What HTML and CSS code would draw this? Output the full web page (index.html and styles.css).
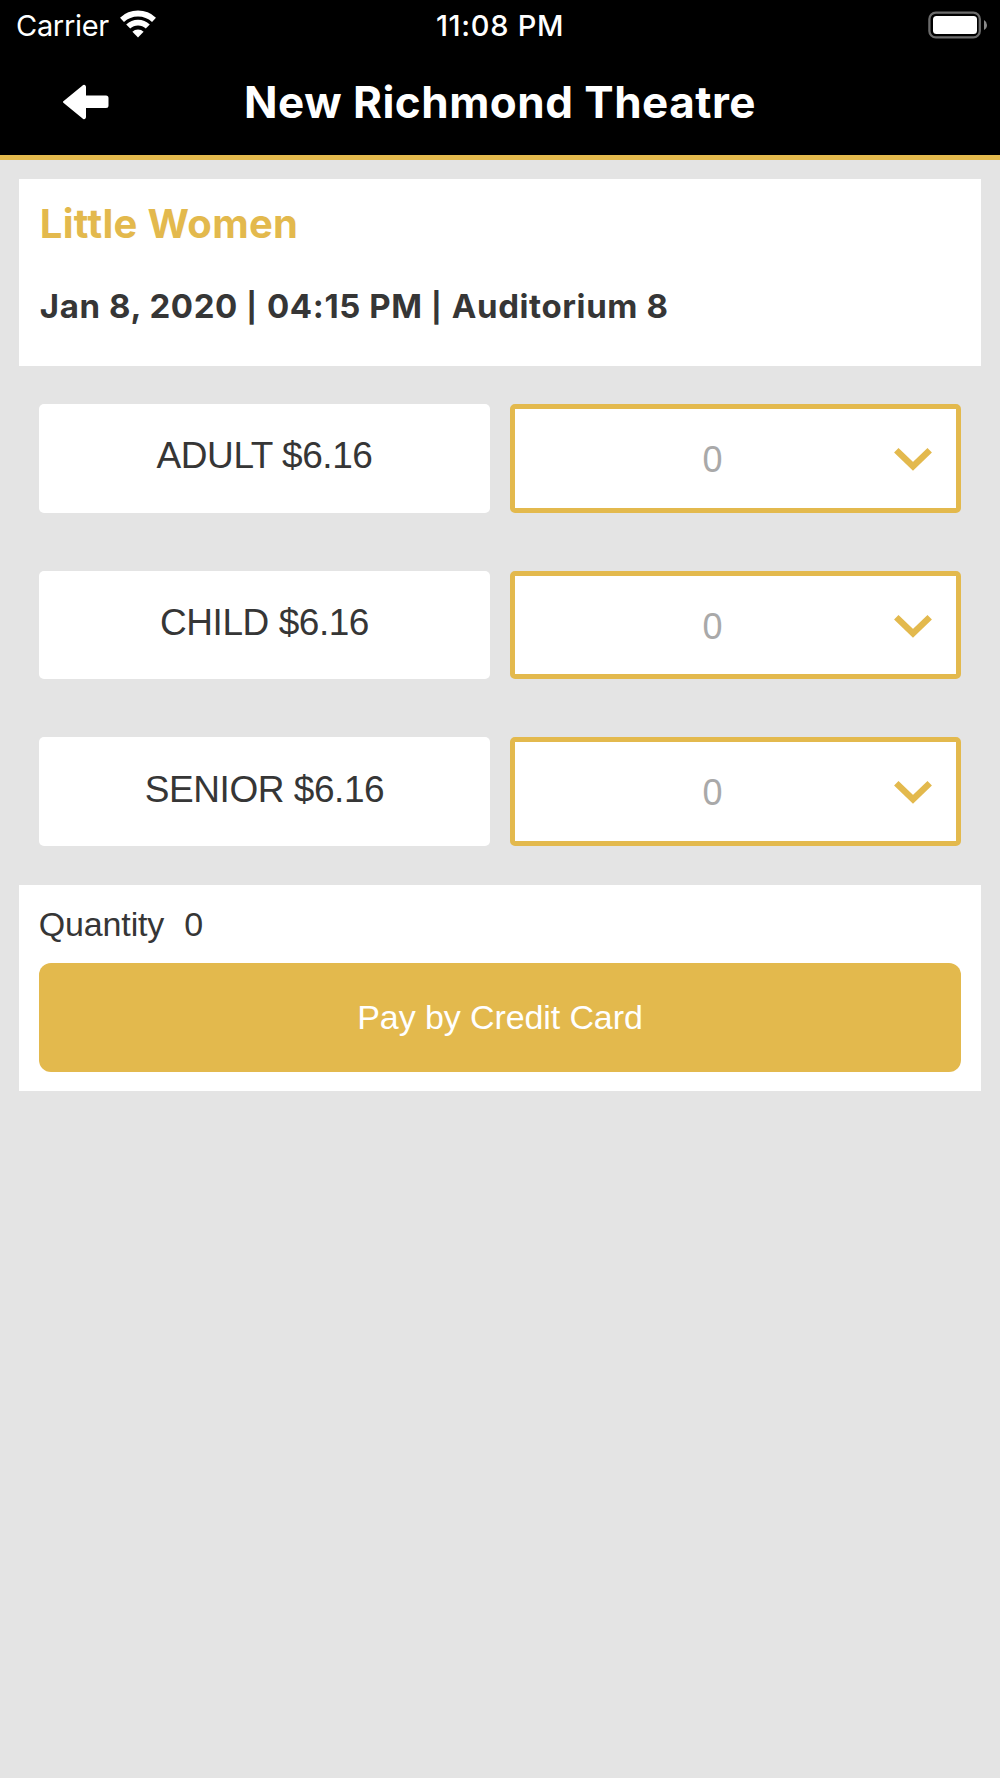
FILE: index.html
```html
<!DOCTYPE html>
<html lang="en">
<head>
<meta charset="utf-8">
<title>New Richmond Theatre</title>
<link rel="stylesheet" href="styles.css">
</head>
<body>
<header class="header">
  <div class="status">
    <div class="status-left">
      <span class="carrier">Carrier</span>
      <svg class="wifi" width="38" height="28" viewBox="0 0 38 28">
        <g fill="none" stroke="#fff" stroke-width="5.800">
          <path d="M3 9.800A23.5 23.5 0 0 1 35 9.800"/>
          <path d="M9.200 16.500A14.2 14.2 0 0 1 28.800 16.500"/>
        </g>
        <path fill="#fff" d="M19 27.500L13.4 21.8A8 8 0 0 1 24.6 21.8Z"/>
      </svg>
    </div>
    <span class="clock">11:08 PM</span>
    <div class="status-right">
      <svg width="60" height="28" viewBox="0 0 60 28">
        <rect x="2.400" y="1.6" width="50.4" height="24.8" rx="6.5" fill="none" stroke="#6c6c6c" stroke-width="2.300"/>
        <rect x="6" y="5" width="44" height="18" rx="3.5" fill="#fff"/>
        <path fill="#8a8a8a" d="M57 9Q60 10.800 60 14Q60 17.300 57 19Z"/>
      </svg>
    </div>
  </div>
  <div class="navbar">
    <svg class="back" width="48" height="36" viewBox="0 0 48 36">
      <path fill="#fff" stroke="#fff" stroke-width="2" stroke-linejoin="round" d="M2 18L21.500 2Q23 1.500 23 3V12.600H44Q45.500 12.600 45.500 14.100V21.400Q45.500 22.900 44 22.900H23V33Q23 34.500 21.500 34Z"/>
    </svg>
    <h1 class="title">New Richmond Theatre</h1>
  </div>
</header>
<main class="content">
  <section class="show">
    <h2 class="movie">Little Women</h2>
    <p class="when">Jan 8, 2020 <span class="bar">|</span> 04:15 PM <span class="bar">|</span> Auditorium 8</p>
  </section>
  <section class="tickets">
    <div class="ticket">
      <div class="price"><span>ADULT $6.16</span></div>
      <div class="select"><span class="value">0</span><svg class="chevron" width="40" height="26" viewBox="0 0 40 26"><path d="M3.300 3.200L20 19.200L36.700 3.200" fill="none" stroke="#e3b94d" stroke-width="6.400"/></svg></div>
    </div>
    <div class="ticket">
      <div class="price"><span>CHILD $6.16</span></div>
      <div class="select"><span class="value">0</span><svg class="chevron" width="40" height="26" viewBox="0 0 40 26"><path d="M3.300 3.200L20 19.200L36.700 3.200" fill="none" stroke="#e3b94d" stroke-width="6.400"/></svg></div>
    </div>
    <div class="ticket">
      <div class="price"><span>SENIOR $6.16</span></div>
      <div class="select"><span class="value">0</span><svg class="chevron" width="40" height="26" viewBox="0 0 40 26"><path d="M3.300 3.200L20 19.200L36.700 3.200" fill="none" stroke="#e3b94d" stroke-width="6.400"/></svg></div>
    </div>
  </section>
  <section class="checkout">
    <div class="quantity"><span>Quantity</span><span>0</span></div>
    <button class="pay" type="button"><span>Pay by Credit Card</span></button>
  </section>
</main>
</body>
</html>
```
FILE: styles.css
```css
* { box-sizing: border-box; }
body {
  margin: 0;
  min-height: 1778px;
  background: #e4e4e4;
  color: #363636;
  font-family: "Liberation Sans", Arial, sans-serif;
}
h1, h2, p { margin: 0; }
svg { display: block; }
.header {
  height: 160px;
  background: #000;
  color: #fff;
  border-bottom: 5px solid #e3b94d;
  font-family: Inter, sans-serif;
}
.status {
  display: grid;
  grid-template-columns: 1fr auto 1fr;
  height: 50px;
  align-items: center;
  padding: 1px 13px 0 16px;
  font-size: 29px;
  line-height: 50px;
}
.status-left { display: flex; align-items: center; gap: 10px; }
.carrier { letter-spacing: -0.3px; }
.wifi { margin-bottom: 4px; }
.clock { font-weight: 500; letter-spacing: 0.7px; margin-right: 3px; }
.status-right { display: flex; justify-content: flex-end; padding-bottom: 2px; }
.navbar {
  display: grid;
  grid-template-columns: 200px 1fr 200px;
  align-items: center;
  height: 104px;
}
.back { margin-left: 62px; }
.title { font-size: 44px; font-weight: 650; letter-spacing: 0.5px; line-height: 53px; white-space: nowrap; justify-self: center; }
.content { padding: 19px 19.300px 0; }
.show { height: 187px; padding: 20px 20.500px 0; background: #fff; font-family: Inter, sans-serif; }
.movie { color: #e3b94d; font-size: 40px; line-height: 50px; font-weight: 650; letter-spacing: 0.3px; }
.when { margin-top: 37px; font-size: 33px; line-height: 40px; font-weight: 650; letter-spacing: 0.6px; white-space: nowrap; }
.bar { font-size: 29px; font-weight: 700; letter-spacing: 1.5px; }
.tickets { display: grid; gap: 58px; padding: 38px 19.500px 39px; }
.ticket { display: grid; grid-template-columns: 1fr 1fr; gap: 19.500px; height: 108.700px; }
.price { display: flex; align-items: center; justify-content: center; padding-bottom: 4px; background: #fff; border-radius: 5px; font-size: 37px; letter-spacing: -0.45px; }
.select { display: grid; grid-template-columns: 1fr 40px; align-items: center; padding: 3px 23px 0 17px; background: #fff; border: 5px solid #e3b94d; border-radius: 5px; }
.value { color: #a9a9a9; font-size: 36px; text-align: center; }
.checkout { height: 206px; padding: 19px 19.500px 0; background: #fff; }
.quantity { display: flex; gap: 20px; height: 59px; font-size: 34px; line-height: 40px; letter-spacing: -0.15px; }
.pay { display: flex; align-items: center; justify-content: center; width: 100%; height: 108.700px; padding: 0; border: 0; border-radius: 12px; background: #e3b94d; color: #fff; font-family: inherit; font-size: 34px; letter-spacing: -0.1px; }
```
